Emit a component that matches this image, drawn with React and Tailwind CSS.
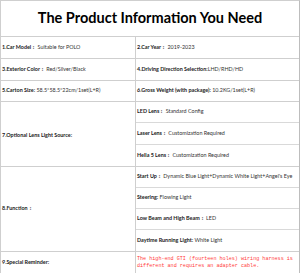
import React from 'react';

const Field = ({ label, value }) => (
    <span className="whitespace-nowrap">
        <span className="font-bold text-[#1a1a1a]">{label}</span>
        <span className="text-[#333]">{value}</span>
    </span>
);

const lensRows = [
    { label: 'LED Lens：', value: ' Standard Config', h: 'h-[21px]' },
    { label: 'Laser Lens：', value: ' Customization Required', h: 'h-[22px]' },
    { label: 'Hella 5 Lens：', value: ' Customization Required', h: 'h-[21px]' },
];

const functionRows = [
    { label: 'Start Up：', value: ' Dynamic Blue Light+Dynamic White Light+Angel\'s Eye' },
    { label: 'Steering:', value: ' Flowing Light' },
    { label: 'Low Beam and High Beam：', value: ' LED' },
    { label: 'Daytime Running Light:', value: ' White Light' },
];

const App = () => {
    return (
        <div className="w-[300px] h-[273px] bg-white font-['Lato',sans-serif] text-[5.4px] leading-none">
            <div className="border-t border-l border-r border-[#cfcfcf] border-r-[#bdbdbd]">
                {/* Title */}
                <div className="h-[36px] border-b border-[#cfcfcf] flex items-center justify-center">
                    <h1 className="text-[14.5px] font-bold text-black font-['Lato',sans-serif]">The Product Information You Need</h1>
                </div>

                {/* Rows 1-6 */}
                <div className="flex h-[22px] border-b border-[#cfcfcf]">
                    <div className="w-[135px] border-r border-[#cfcfcf] flex items-center pl-[1px]">
                        <Field label="1.Car Model：" value=" Suitable for POLO" />
                    </div>
                    <div className="flex-1 flex items-center pl-[1px]">
                        <Field label="2.Car Year：" value=" 2019-2023" />
                    </div>
                </div>
                <div className="flex h-[22px] border-b border-[#cfcfcf]">
                    <div className="w-[135px] border-r border-[#cfcfcf] flex items-center pl-[1px]">
                        <Field label="3.Exterior Color：" value=" Red/Silver/Black" />
                    </div>
                    <div className="flex-1 flex items-center pl-[1px]">
                        <Field label="4.Driving Direction Selection:" value="LHD/RHD/HD" />
                    </div>
                </div>
                <div className="flex h-[21px] border-b border-[#cfcfcf]">
                    <div className="w-[135px] border-r border-[#cfcfcf] flex items-center pl-[1px]">
                        <Field label="5.Carton Size:" value=" 58.5*58.5*22cm/1set(L+R)" />
                    </div>
                    <div className="flex-1 flex items-center pl-[1px]">
                        <Field label="6.Gross Weight (with package):" value=" 10.2KG/1set(L+R)" />
                    </div>
                </div>

                {/* Row 7 */}
                <div className="flex border-b border-[#cfcfcf]">
                    <div className="w-[135px] border-r border-[#cfcfcf] flex items-center pl-[1px] pt-[3px]">
                        <span className="font-bold text-[#1a1a1a]">7.Optional Lens Light Source:</span>
                    </div>
                    <div className="flex-1 flex flex-col">
                        {lensRows.map((r, i) => (
                            <div key={r.label} className={`${r.h} flex items-center pl-[1px] ${i < lensRows.length - 1 ? 'border-b border-[#d9d9d9]' : ''}`}>
                                <Field label={r.label} value={r.value} />
                            </div>
                        ))}
                    </div>
                </div>

                {/* Row 8 */}
                <div className="flex border-b border-[#cfcfcf]">
                    <div className="w-[135px] border-r border-[#cfcfcf] flex items-center pl-[1px]">
                        <span className="font-bold text-[#1a1a1a]">8.Function：</span>
                    </div>
                    <div className="flex-1 flex flex-col">
                        {functionRows.map((r, i) => (
                            <div key={r.label} className={`h-[21px] flex items-center pl-[1px] ${i < functionRows.length - 1 ? 'border-b border-[#d9d9d9]' : ''}`}>
                                <Field label={r.label} value={r.value} />
                            </div>
                        ))}
                    </div>
                </div>

                {/* Row 9 */}
                <div className="flex h-[22px] border-b border-[#cfcfcf]">
                    <div className="w-[135px] border-r border-[#cfcfcf] flex items-center pl-[1px]">
                        <span className="font-bold text-[#1a1a1a]">9.Special Reminder:</span>
                    </div>
                    <div className="flex-1 flex items-center pl-[1px]">
                        <p className="font-['Liberation_Mono',monospace] text-[5.1px] leading-[7px] text-[#ff3b3b]">
                            The high-end GTI (fourteen holes) wiring harness is<br />
                            different and requires an adapter cable.
                        </p>
                    </div>
                </div>
            </div>
        </div>
    );
};

export default App;
